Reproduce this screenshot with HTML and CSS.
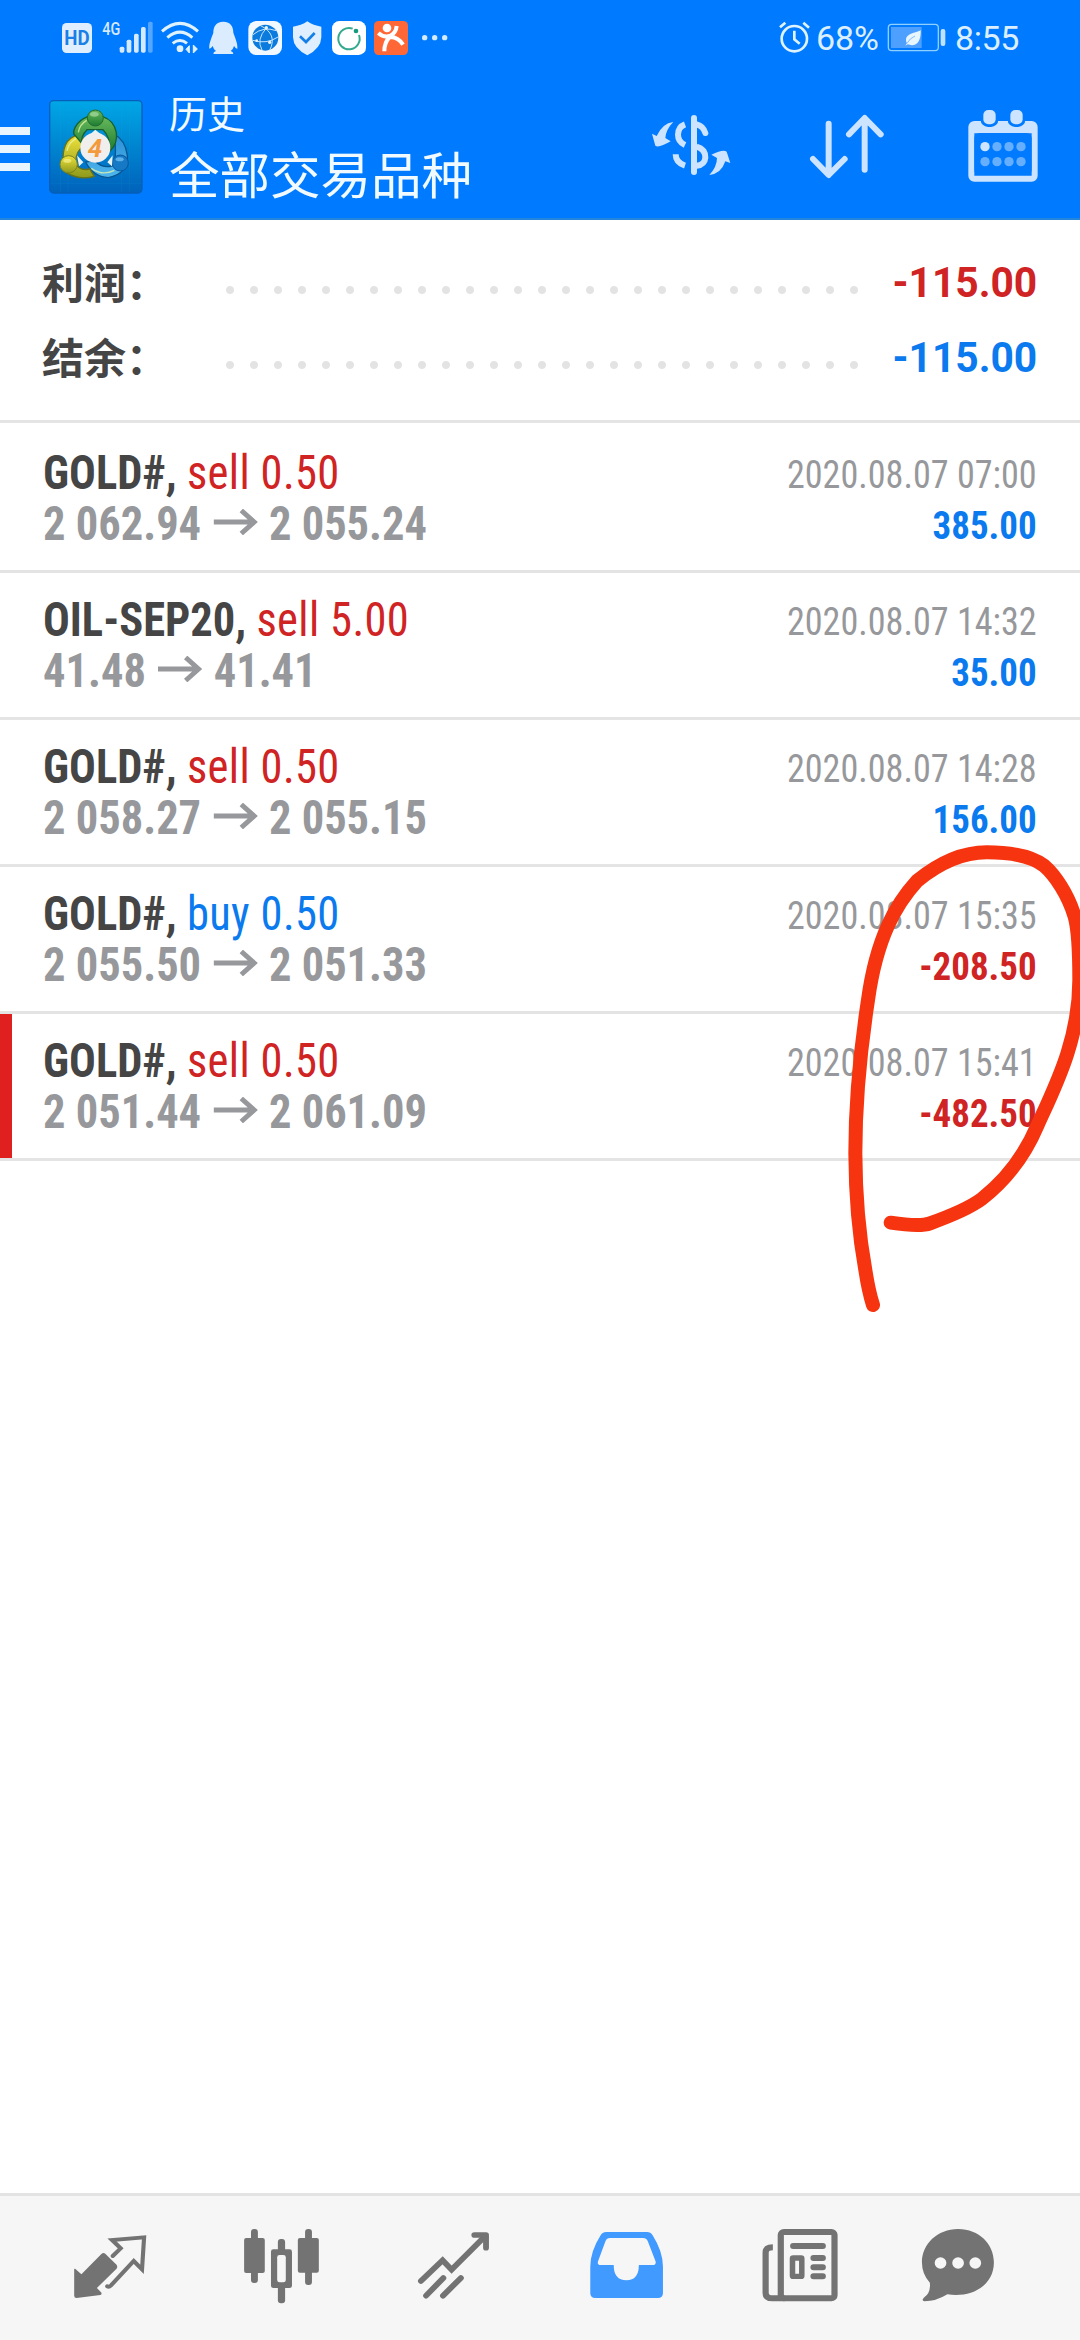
FILE: index.html
```
<!DOCTYPE html>
<html lang="zh-CN">

<head>
    <meta charset="UTF-8">
    <meta name="viewport" content="width=device-width, initial-scale=1.0">
    <title>历史</title>
    <link rel="stylesheet" href="styles.css">
</head>

<body>
    <header class="header">
        <div class="status-bar">
            <div class="status-left">
                <svg width="34" height="40" viewBox="180 54 102 120">
                    <rect x="186" y="69" width="90" height="90" rx="14" fill="#e0efff"/>
                    <text class="hd-text" x="231" y="134" text-anchor="middle" textLength="76" lengthAdjust="spacingAndGlyphs">HD</text>
                </svg>
                <svg width="62" height="40" viewBox="282 54 186 120" fill="#d5e9ff">
                    <text class="net-text" x="307" y="106" textLength="54" lengthAdjust="spacingAndGlyphs">4G</text>
                    <rect x="359" y="140" width="14" height="18" rx="5"/>
                    <rect x="380" y="119" width="14" height="39" rx="5"/>
                    <rect x="402" y="101" width="14" height="57" rx="5"/>
                    <rect x="423" y="81" width="14" height="77" rx="5"/>
                    <rect x="444" y="65" width="14" height="93" rx="5" opacity=".4"/>
                </svg>
                <svg width="48" height="40" viewBox="468 54 144 120" fill="none" stroke="#e0f2ff" stroke-width="9">
                    <path d="M486 94Q540 46 594 94M502 113Q540 80 577 113M518 130Q540 113 561 130"/>
                    <circle cx="540" cy="146" r="10" fill="#e0f2ff" stroke="none"/>
                    <path d="M568 137v22l-10-11zM580 159v-24l12 12z" fill="#e0f2ff" stroke-width="3"/>
                </svg>
                <svg width="40" height="40" viewBox="612 54 120 120" fill="#dcecff">
                    <path d="M670 65C647 65 640 81 640 98C636 111 626 130 628 146Q633 146 638 138Q640 147 648 153Q638 157 641 162H699Q702 157 692 153Q700 147 702 138Q708 147 712 146C714 130 704 111 700 98C700 81 693 65 670 65Z"/>
                </svg>
                <svg width="43" height="40" viewBox="732 54 129 120">
                    <rect x="745" y="63" width="101" height="102" rx="24" fill="#f1f8ff"/>
                    <circle cx="796" cy="113" r="39" fill="#0b7cdd"/>
                    <path d="M759 104Q790 78 829 92M758 121Q800 134 834 111M780 76Q834 102 809 151M799 84Q768 118 786 150" fill="none" stroke="#c7e5ff" stroke-width="3"/>
                    <g fill="#e7f5ff"><circle cx="799" cy="83" r="5"/><circle cx="809" cy="127" r="5"/><circle cx="770" cy="122" r="4"/></g>
                </svg>
                <svg width="40" height="40" viewBox="861 54 120 120">
                    <path d="M922 64Q940 77 964 80V112Q963 145 922 166Q880 145 879 112V80Q904 77 922 64Z" fill="#e0efff"/>
                    <path d="M900 109L918 126L944 99" fill="none" stroke="#157fe8" stroke-width="8"/>
                </svg>
                <svg width="43" height="40" viewBox="981 54 129 120">
                    <rect x="996" y="63" width="102" height="102" rx="22" fill="#fff"/>
                    <path d="M1058 86A32 32 0 1 0 1077 105" fill="none" stroke="#35a990" stroke-width="6"/>
                    <circle cx="1068" cy="93" r="7" fill="#159a80"/>
                </svg>
                <svg width="43" height="40" viewBox="1110 54 129 120" fill="none" stroke="#fff" stroke-width="10">
                    <rect x="1122" y="63" width="102" height="102" rx="14" fill="#ff6836" stroke="none"/>
                    <circle cx="1161" cy="84" r="13" fill="#fff" stroke="none"/>
                    <path d="M1135 99Q1150 113 1169 108Q1188 100 1190 78M1153 154Q1153 127 1169 111Q1194 110 1209 134" stroke-width="12"/>
                </svg>
                <svg width="40" height="40" viewBox="1239 54 120 120" fill="#d5ecff">
                    <circle cx="1274" cy="113" r="8"/><circle cx="1304" cy="113" r="8"/><circle cx="1334" cy="113" r="8"/>
                </svg>
            </div>
            <div class="status-right">
                <svg width="36" height="40" viewBox="527 54 108 120" fill="none" stroke="#dff3ff" stroke-width="8">
                    <circle cx="579" cy="116" r="38"/>
                    <path d="M579 92V118L595 131M536 82L552 68M606 68L623 83"/>
                </svg>
                <span class="battery-text">68%</span>
                <svg width="60" height="40" viewBox="857 54 180 120">
                    <rect x="861" y="73" width="150" height="79" rx="10" fill="none" stroke="#8ed0ff" stroke-width="4"/>
                    <rect x="869" y="81" width="92" height="63" fill="#4da0ff"/>
                    <rect x="1018" y="87" width="14" height="51" rx="6" fill="#bfe3ff"/>
                    <path d="M958 90C950 98 914 98 914 120Q914 127 917 129L912 137L919 133C944 142 960 126 958 90Z" fill="#e8f6ff"/>
                    <path d="M917 130Q925 115 941 108" stroke="#4da0ff" stroke-width="2" fill="none"/>
                </svg>
                <span class="clock">8:55</span>
            </div>
        </div>
        <div class="toolbar">
            <div class="menu">
                <span></span>
                <span></span>
                <span></span>
            </div>
            <svg class="logo" width="96" height="96" viewBox="145 297 288 288">
                <defs>
                    <linearGradient id="logo-bg" x1="0" y1="0" x2="0" y2="1">
                        <stop offset="0" stop-color="#00a7e6"/>
                        <stop offset="1" stop-color="#0062bb"/>
                    </linearGradient>
                    <linearGradient id="green" x1="0" y1="0" x2="0" y2="1">
                        <stop offset="0" stop-color="#69b95b"/>
                        <stop offset="1" stop-color="#1c7c31"/>
                    </linearGradient>
                    <linearGradient id="yellow" x1="0" y1="0" x2="0" y2="1">
                        <stop offset="0" stop-color="#f0e23c"/>
                        <stop offset="1" stop-color="#8f9a1c"/>
                    </linearGradient>
                    <linearGradient id="blue" x1="0" y1="0" x2="0" y2="1">
                        <stop offset="0" stop-color="#2a8fd6"/>
                        <stop offset="1" stop-color="#4fb6ec"/>
                    </linearGradient>
                </defs>
                <rect x="150" y="302" width="277" height="277" rx="12" fill="url(#logo-bg)" stroke="#065fb8" stroke-width="4"/>
                <path d="M182 304V576M205 304V576M365 304V576M390 304V576M152 330H426M152 550H426" stroke="#28b2e8" stroke-width="1" opacity=".3"/>
                <path d="M343 402Q377 420 383 466Q387 520 326 533Q280 530 258 486L284 482Q310 506 337 498Q354 478 343 402Z" fill="url(#blue)" stroke="#075690" stroke-width="4"/>
                <path d="M248 403C205 406 190 435 190 476L200 518Q240 542 284 529L270 507Q237 514 228 488Q228 452 252 438Z" fill="url(#yellow)" stroke="#687217" stroke-width="4"/>
                <path d="M264 350C225 365 216 400 227 407L246 430Q243 408 262 389H310Q332 410 331 453Q354 432 350 398Q343 361 309 350Z" fill="url(#green)" stroke="#17622c" stroke-width="4"/>
                <path d="M236 397Q239 374 261 361M202 453Q206 428 229 416M275 505Q309 529 344 511" fill="none" stroke="#eaf7aa" stroke-width="4" opacity=".75"/>
                <circle cx="287" cy="354" r="24" fill="url(#green)" stroke="#236b31" stroke-width="3"/>
                <circle cx="207" cy="493" r="26" fill="url(#yellow)" stroke="#7b821d" stroke-width="3"/>
                <circle cx="362" cy="489" r="24" fill="#1679c5" stroke="#07589e" stroke-width="3"/>
                <ellipse cx="284" cy="343" rx="13" ry="7" fill="#a9dca2" opacity=".7"/>
                <ellipse cx="203" cy="482" rx="12" ry="6" fill="#fdf89c" opacity=".6"/>
                <ellipse cx="360" cy="478" rx="12" ry="6" fill="#7cc8f6" opacity=".7"/>
                <path d="M270 404L287 389L305 404ZM232 466L251 487L238 499ZM339 466L323 487L337 499Z" fill="#e9f4f4"/>
                <circle cx="287" cy="443" r="45" fill="#f1eeee"/>
                <text class="logo-text" x="286" y="471" text-anchor="middle">4</text>
            </svg>
            <div class="titles">
                <div class="subtitle">历史</div>
                <div class="title">全部交易品种</div>
            </div>
            <div class="actions">
                <svg width="84" height="84" viewBox="144 312 252 252" fill="none" stroke="#cce4ff" stroke-width="18">
                    <path d="M279 354V516" stroke-linecap="round"/>
                    <path d="M287 373Q307 378 313 399" stroke-linecap="round"/>
                    <path d="M252 373Q231 381 231 404Q231 425 252 435M224 463Q224 488 252 497M287 440Q313 447 313 473Q311 494 287 497"/>
                    <path d="M217 366Q184 370 167 408L153 401L163 437Q173 445 209 424L193 414Q195 388 217 366ZM325 525Q360 522 373 484L388 489L377 455Q367 447 331 464L348 474Q348 500 325 525Z" fill="#cce4ff" stroke="none"/>
                </svg>
                <svg width="84" height="84" viewBox="613 312 252 252" fill="none" stroke="#cce4ff" stroke-width="18" stroke-linecap="round" stroke-linejoin="round">
                    <path d="M684 371V522M637 477L684 525L732 477M792 509V356M745 403L792 354L840 403"/>
                </svg>
                <svg width="84" height="84" viewBox="1082 312 252 252">
                    <rect x="1113" y="372" width="190" height="164" rx="9" fill="none" stroke="#cce4ff" stroke-width="18"/>
                    <path d="M1113 372H1303V400H1113Z" fill="#cce4ff"/>
                    <rect x="1122" y="399" width="172" height="126" rx="16" fill="#007aff"/>
                    <rect x="1141" y="322" width="53" height="59" rx="22" fill="#007aff"/>
                    <rect x="1222" y="322" width="53" height="59" rx="22" fill="#007aff"/>
                    <rect x="1149" y="330" width="37" height="43" rx="15" fill="#cce4ff"/>
                    <rect x="1230" y="330" width="37" height="43" rx="15" fill="#cce4ff"/>
                    <g fill="#66afff">
                        <circle cx="1154" cy="440" r="14" fill="#cce4ff"/><circle cx="1190" cy="440" r="14"/><circle cx="1226" cy="440" r="14"/><circle cx="1262" cy="440" r="14"/>
                        <circle cx="1154" cy="485" r="14"/><circle cx="1190" cy="485" r="14"/><circle cx="1226" cy="485" r="14"/><circle cx="1262" cy="485" r="14"/>
                    </g>
                </svg>
            </div>
        </div>
    </header>

    <main class="content">
        <section class="summary">
            <div class="summary-row">
                <span class="label">利润：</span>
                <span class="dots"></span>
                <span class="value red">-115.00</span>
            </div>
            <div class="summary-row">
                <span class="label">结余：</span>
                <span class="dots"></span>
                <span class="value blue">-115.00</span>
            </div>
        </section>

        <ul class="deals">
            <li class="deal">
                <div class="deal-left">
                    <div class="symbol"><b>GOLD#,</b> <span class="red">sell 0.50</span></div>
                    <div class="price">2 062.94 <svg class="arrow" viewBox="0 0 45 26" preserveAspectRatio="none"><path d="M0 13H42M28 1.5L41 13L28 24.5"/></svg> 2 055.24</div>
                </div>
                <div class="deal-right">
                    <div class="date">2020.08.07 07:00</div>
                    <div class="profit blue">385.00</div>
                </div>
            </li>
            <li class="deal">
                <div class="deal-left">
                    <div class="symbol"><b>OIL-SEP20,</b> <span class="red">sell 5.00</span></div>
                    <div class="price">41.48 <svg class="arrow" viewBox="0 0 45 26" preserveAspectRatio="none"><path d="M0 13H42M28 1.5L41 13L28 24.5"/></svg> 41.41</div>
                </div>
                <div class="deal-right">
                    <div class="date">2020.08.07 14:32</div>
                    <div class="profit blue">35.00</div>
                </div>
            </li>
            <li class="deal">
                <div class="deal-left">
                    <div class="symbol"><b>GOLD#,</b> <span class="red">sell 0.50</span></div>
                    <div class="price">2 058.27 <svg class="arrow" viewBox="0 0 45 26" preserveAspectRatio="none"><path d="M0 13H42M28 1.5L41 13L28 24.5"/></svg> 2 055.15</div>
                </div>
                <div class="deal-right">
                    <div class="date">2020.08.07 14:28</div>
                    <div class="profit blue">156.00</div>
                </div>
            </li>
            <li class="deal">
                <div class="deal-left">
                    <div class="symbol"><b>GOLD#,</b> <span class="blue">buy 0.50</span></div>
                    <div class="price">2 055.50 <svg class="arrow" viewBox="0 0 45 26" preserveAspectRatio="none"><path d="M0 13H42M28 1.5L41 13L28 24.5"/></svg> 2 051.33</div>
                </div>
                <div class="deal-right">
                    <div class="date">2020.08.07 15:35</div>
                    <div class="profit red">-208.50</div>
                </div>
            </li>
            <li class="deal stop-loss">
                <div class="deal-left">
                    <div class="symbol"><b>GOLD#,</b> <span class="red">sell 0.50</span></div>
                    <div class="price">2 051.44 <svg class="arrow" viewBox="0 0 45 26" preserveAspectRatio="none"><path d="M0 13H42M28 1.5L41 13L28 24.5"/></svg> 2 061.09</div>
                </div>
                <div class="deal-right">
                    <div class="date">2020.08.07 15:41</div>
                    <div class="profit red">-482.50</div>
                </div>
            </li>
        </ul>
    </main>

    <nav class="tabs">
        <svg viewBox="168 132 302 252" preserveAspectRatio="none" fill="#737373">
            <path d="M215 267Q218 265 221 269L236 283L294 222Q300 216 306 222L338 254Q342 260 338 266L281 324L293 337Q297 343 291 345L222 354Q215 354 215 347Z"/>
            <path d="M327 228L350 205L325 180L418 172L412 268L388 243L322 316Q316 322 311 319" fill="none" stroke="#737373" stroke-width="12" stroke-linecap="round"/>
        </svg>
        <svg viewBox="668 132 302 252" preserveAspectRatio="none" fill="#737373">
            <rect x="729" y="147" width="20" height="162" rx="9"/><rect x="709" y="174" width="60" height="105" rx="6"/>
            <rect x="886" y="147" width="20" height="168" rx="9"/><rect x="865" y="174" width="61" height="104" rx="6"/>
            <rect x="807" y="177" width="21" height="193" rx="9"/><rect x="787" y="208" width="61" height="116" rx="7"/>
            <rect x="805" y="225" width="25" height="82" rx="7" fill="#f6f6f6"/>
        </svg>
        <svg viewBox="1167 132 302 252" preserveAspectRatio="none" fill="none" stroke="#737373" stroke-width="17">
            <path d="M1222 303L1285 241L1311 269L1408 169" stroke-linecap="round"/>
            <path d="M1377 165H1411V203" stroke-linecap="round" stroke-linejoin="round"/>
            <path d="M1237 347L1287 294M1286 347L1338 294" stroke-linecap="round"/>
        </svg>
        <svg viewBox="98.7 132 302 252" preserveAspectRatio="none">
            <path d="M192 156H311Q321 156 327 166Q357 215 357 260V340Q357 354 342 354H161Q146 354 146 340V260Q146 215 176 166Q182 156 192 156Z" fill="#409aff"/>
            <path d="M203 174H299Q309 174 313 184L336 245Q337 255 327 255H287Q287 301 251 301Q214 301 214 255H177Q166 255 168 245L190 184Q194 174 203 174Z" fill="#f6f6f6"/>
        </svg>
        <svg viewBox="598 132 302 252" preserveAspectRatio="none" fill="none" stroke="#737373" stroke-width="18">
            <rect x="699" y="156" width="156" height="199" rx="9"/>
            <path d="M676 202Q655 202 655 218V338Q655 355 675 355H710"/>
            <path d="M735 198H821M794 234H821M794 262H821M794 289H821" stroke-linecap="round"/>
            <rect x="733" y="234" width="27" height="55" rx="2" stroke-width="16"/>
        </svg>
        <svg viewBox="1097.6 132 302 252" preserveAspectRatio="none" fill="#737373">
            <path d="M1214 147C1275 147 1318 192 1318 247C1318 317 1254 354 1183 343Q1150 364 1116 364Q1106 361 1116 352Q1135 338 1132 308Q1109 283 1109 247C1109 192 1154 147 1214 147Z"/>
            <g fill="#f6f6f6"><circle cx="1163" cy="249" r="17"/><circle cx="1214" cy="249" r="17"/><circle cx="1264" cy="249" r="17"/></g>
        </svg>
    </nav>

    <!-- pen mark over the last two deals -->
    <svg class="marker" viewBox="0 0 1020 1500">
        <path d="M452 1208Q540 1221 570 1210C645 1183 690 1163 725 1137C805 1075 855 1005 893 915C945 800 1018 660 1018 480Q1018 340 1004 290C985 225 945 165 912 137C870 105 800 97 740 97C660 97 590 135 531 183C470 250 410 350 384 540C355 730 346 880 346 1000Q347 1190 376 1350Q386 1415 399 1455"/>
    </svg>
</body>

</html>
```
FILE: styles.css
```
* {
    box-sizing: border-box;
    margin: 0;
    padding: 0;
}

body {
    width: 1080px;
    height: 2340px;
    position: relative;
    display: flex;
    flex-direction: column;
    overflow: hidden;
    background-color: #fff;
    font-family: Roboto, "Noto Sans CJK SC", sans-serif;
}

svg {
    display: block;
    flex-shrink: 0;
}

.red {
    color: #d02323;
}

.blue {
    color: #0a7aee;
}

/* Header */
.header {
    height: 220px;
    background-color: #007aff;
    border-bottom: 2px solid #2485dc;
}

.status-bar {
    height: 76px;
    display: flex;
    justify-content: space-between;
    align-items: center;
    padding: 0 61px 0 60px;
}

.status-left,
.status-right {
    display: flex;
    align-items: center;
}

.status-right {
    color: #dcefff;
    font-size: 34px;
    line-height: 40px;
}

.battery-text {
    margin: 0 8px 0 3px;
}

.clock {
    margin-left: 8px;
    letter-spacing: -0.4px;
}

.hd-text {
    font: bold 58px Roboto, sans-serif;
    fill: #1b7fe8;
}

.net-text {
    font: 500 54px Roboto, sans-serif;
}

.logo-text {
    font: italic bold 78px Roboto, sans-serif;
    fill: #f39a3d;
}

.toolbar {
    height: 142px;
    display: flex;
}

.menu {
    width: 30px;
    padding-top: 51px;
    display: flex;
    flex-direction: column;
    gap: 10px;
}

.menu span {
    height: 8px;
    background-color: #e8f5ff;
}

.logo {
    margin: 23px 0 0 18px;
}

.titles {
    margin-left: 25px;
    color: #f0faff;
}

.subtitle {
    font-size: 38px;
    line-height: 48px;
    margin-top: 15px;
}

.title {
    font-size: 50.5px;
    line-height: 60px;
    margin-top: 8px;
}

.actions {
    display: flex;
    gap: 72px;
    margin: 28px 35px 0 auto;
}

/* Summary */
.summary {
    height: 203px;
    padding: 25px 43px 0 42px;
    border-bottom: 3px solid #e4e4e4;
}

.summary-row {
    height: 75px;
    display: flex;
    align-items: center;
    font-size: 42px;
    font-weight: bold;
}

.label {
    width: 176px;
    color: #454545;
    margin-top: -5px;
}

.dots {
    width: 648px;
    height: 24px;
    margin-top: 15px;
    background: radial-gradient(circle at center, #e3e3e3 3.5px, transparent 4.5px) 0 0 / 24px 24px;
}

.value {
    margin-left: auto;
    transform: scaleX(0.97);
    transform-origin: right;
}

/* Deals */
.deals {
    list-style: none;
    padding-top: 3px;
}

.deal {
    height: 147px;
    display: flex;
    justify-content: space-between;
    padding: 21px 43px 0;
    border-bottom: 3px solid #e4e4e4;
    font-family: "Roboto Condensed", Roboto, sans-serif;
    font-stretch: 75%;
    white-space: nowrap;
}

.stop-loss {
    background: linear-gradient(#e01f1f, #e01f1f) no-repeat 0 0 / 12px 100%;
}

.symbol,
.price {
    font-size: 48px;
    line-height: 51px;
    transform: scaleX(0.927);
    transform-origin: left;
}

.symbol b {
    color: #454545;
}

.symbol span {
    letter-spacing: 0.4px;
}

.price {
    color: #97989b;
    font-weight: bold;
}

.arrow {
    display: inline-block;
    width: 48px;
    height: 26px;
    margin: 0 1px 0 2px;
    fill: none;
    stroke: #97989b;
    stroke-width: 5;
    vertical-align: 5px;
}

.deal-right {
    text-align: right;
    font-size: 39px;
    line-height: 51px;
    padding-top: 3px;
}

.date {
    color: #97989b;
    transform: scaleX(0.926);
    transform-origin: right;
}

.profit {
    font-weight: bold;
    transform: scaleX(0.947);
    transform-origin: right;
}

/* Bottom tabs */
.tabs {
    height: 147px;
    margin-top: auto;
    padding: 28px 24px 0;
    display: flex;
    background-color: #f6f6f6;
    border-top: 3px solid #e3e3e3;
}

.tabs svg {
    width: 104px;
    height: 84px;
    margin: 0 34px;
}

.marker {
    position: absolute;
    left: 740px;
    top: 820px;
    width: 340px;
    height: 500px;
    fill: none;
    stroke: #f63510;
    stroke-width: 42;
    stroke-linecap: round;
    stroke-linejoin: round;
}
```
